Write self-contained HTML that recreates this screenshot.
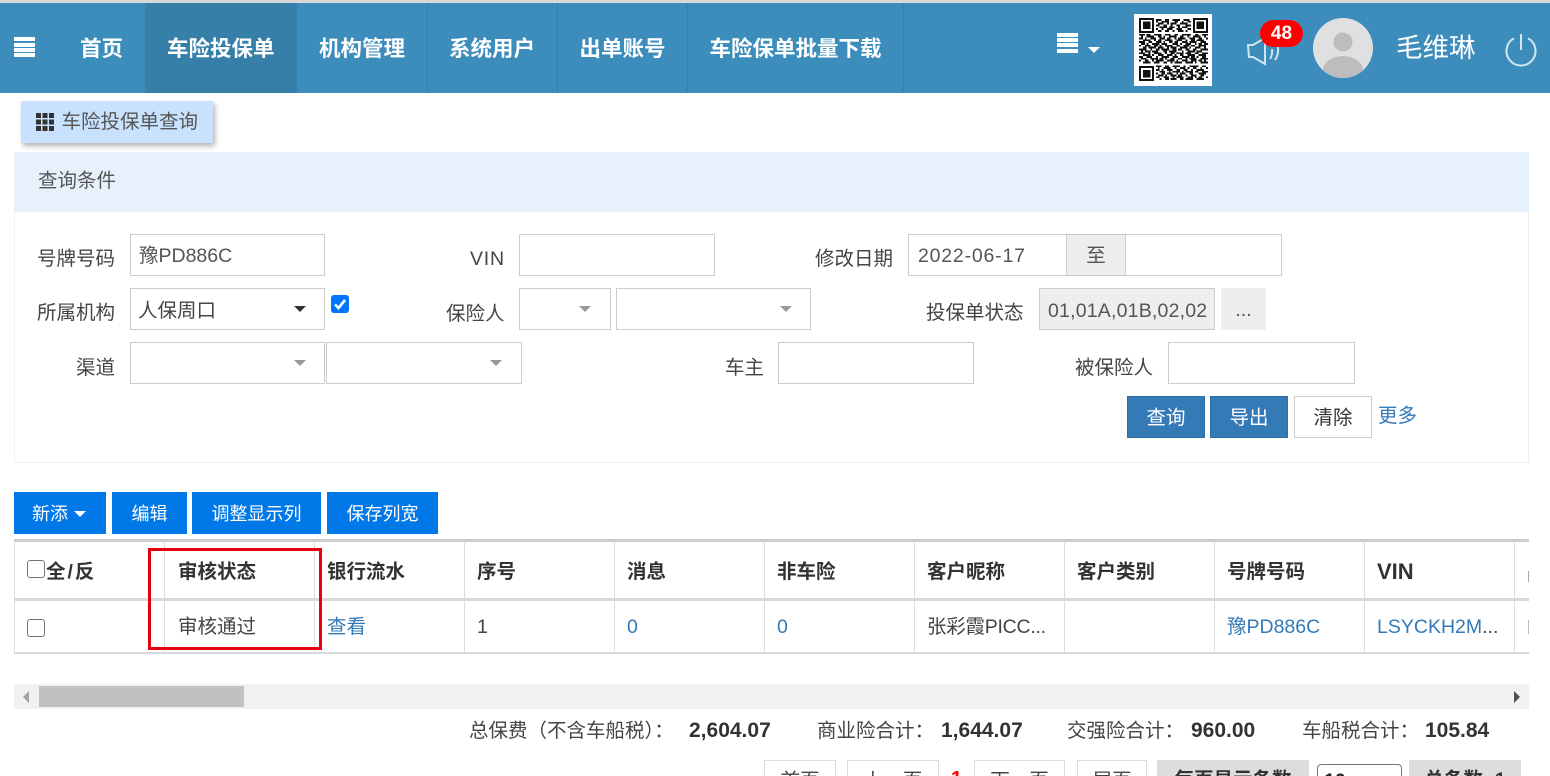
<!DOCTYPE html>
<html lang="zh">
<head>
<meta charset="utf-8">
<title>车险投保单查询</title>
<style>
html,body{margin:0;padding:0;background:#fff;width:1550px;height:776px;overflow:hidden;}
#p{position:relative;width:1550px;height:776px;overflow:hidden;font-family:"Liberation Sans","Noto Sans CJK SC",sans-serif;font-size:19.5px;color:#444;}
.a{position:absolute;box-sizing:border-box;}
.t{position:absolute;white-space:nowrap;line-height:28px;height:28px;}
.nav{position:absolute;top:35px;line-height:28px;font-size:21.5px;font-weight:bold;color:#fff;white-space:nowrap;}
.sep{position:absolute;top:3px;width:1px;height:90px;background:#367fa9;}
.in{position:absolute;box-sizing:border-box;border:1px solid #ccc;background:#fff;height:42px;line-height:42px;color:#555;white-space:nowrap;}
.car{position:absolute;width:0;height:0;border-left:6px solid transparent;border-right:6px solid transparent;border-top:6px solid #999;}
.btn{position:absolute;box-sizing:border-box;height:42px;line-height:42px;text-align:center;white-space:nowrap;}
.pb{position:absolute;top:492px;height:42px;line-height:44px;background:#0078e7;color:#fff;text-align:center;font-size:18px;white-space:nowrap;}
.hl{position:absolute;left:14px;width:1515px;background:#d9d9d9;}
.vl{position:absolute;top:541px;height:112px;width:1px;background:#ddd;}
.th{position:absolute;top:558px;line-height:28px;font-weight:bold;color:#333;white-space:nowrap;}
.td{position:absolute;top:613px;line-height:28px;color:#444;white-space:nowrap;}
.lk{color:#337ab7;}
.cb{position:absolute;box-sizing:border-box;width:18px;height:18px;border:1.5px solid #767676;border-radius:3px;background:#fff;}
.sm{position:absolute;top:717px;line-height:28px;white-space:nowrap;color:#444;}
.b{font-weight:bold;color:#333;font-size:21px;}
.pg{position:absolute;top:760px;height:30px;box-sizing:border-box;border:1px solid #ddd;background:#fff;text-align:center;line-height:40px;white-space:nowrap;color:#444;}
.pd{position:absolute;top:760px;height:30px;box-sizing:border-box;background:#ddd;text-align:center;line-height:40px;font-weight:bold;color:#333;white-space:nowrap;}
</style>
</head>
<body>
<div id="p">
<!-- top bar -->
<div class="a" style="left:0;top:0;width:1550px;height:3px;background:#d8d8d8"></div>
<div class="a" style="left:0;top:3px;width:1550px;height:90px;background:#3c8dbc"></div>
<div class="a" style="left:145px;top:3px;width:152px;height:90px;background:#367fa9"></div>
<div class="sep" style="left:427px"></div>
<div class="sep" style="left:557px"></div>
<div class="sep" style="left:687px"></div>
<div class="sep" style="left:903px"></div>
<div class="a" style="left:14px;top:37px;width:21px;height:4px;background:#fff"></div>
<div class="a" style="left:14px;top:43px;width:21px;height:4px;background:#fff"></div>
<div class="a" style="left:14px;top:48px;width:21px;height:4px;background:#fff"></div>
<div class="a" style="left:14px;top:53px;width:21px;height:4px;background:#fff"></div>
<div class="nav" style="left:80px">首页</div>
<div class="nav" style="left:167px">车险投保单</div>
<div class="nav" style="left:319px">机构管理</div>
<div class="nav" style="left:449px">系统用户</div>
<div class="nav" style="left:579.500px">出单账号</div>
<div class="nav" style="left:709.500px">车险保单批量下载</div>
<!-- right hamburger -->
<div class="a" style="left:1057px;top:33px;width:21px;height:4px;background:#fff"></div>
<div class="a" style="left:1057px;top:38px;width:21px;height:4px;background:#fff"></div>
<div class="a" style="left:1057px;top:43px;width:21px;height:4px;background:#fff"></div>
<div class="a" style="left:1057px;top:49px;width:21px;height:4px;background:#fff"></div>
<div class="car" style="left:1088px;top:47px;border-top-color:#fff"></div>
<!-- QR -->
<div class="a" style="left:1134px;top:14px;width:78px;height:72px;background:#fff"></div>
<svg class="a" style="left:1139px;top:18px" width="69" height="63" viewBox="0 0 37 34" shape-rendering="crispEdges">
<g fill="none" stroke="#111" stroke-width="1">
<path d="M.5.5h7v7h-7zM29.500.5h7v7h-7zM.5 26.500h7v7h-7z"/>
<path d="M9 1h3M14 1h2M18 1h4M24 1h3M9 2h1M12 2h4M19 2h2M23 2h1M26 2h2M10 3h3M15 3h1M17 3h3M22 3h4M9 4h2M13 4h2M17 4h1M20 4h2M25 4h3M11 5h4M16 5h3M21 5h1M23 5h3M9 6h1M12 6h1M15 6h3M20 6h3M26 6h2M10 7h2M14 7h2M18 7h1M21 7h3M25 7h1"/>
<path d="M0 9h3M4 9h2M8 9h4M14 9h3M19 9h2M23 9h5M30 9h2M34 9h3M1 10h1M4 10h4M10 10h2M13 10h1M16 10h4M22 10h2M26 10h1M29 10h4M35 10h1M0 11h2M3 11h1M6 11h3M11 11h3M15 11h2M19 11h1M21 11h4M27 11h3M32 11h2M36 11h1M2 12h4M8 12h1M10 12h2M14 12h4M20 12h3M25 12h1M28 12h2M31 12h4M0 13h3M5 13h2M9 13h3M13 13h1M16 13h2M19 13h2M23 13h3M27 13h4M33 13h3M1 14h2M4 14h1M7 14h4M12 14h3M18 14h3M22 14h1M25 14h3M30 14h1M32 14h2M35 14h2M0 15h1M3 15h3M8 15h2M11 15h1M14 15h4M20 15h2M24 15h3M28 15h2M32 15h4M2 16h2M5 16h4M10 16h3M15 16h1M17 16h3M22 16h4M27 16h1M30 16h3M35 16h1M0 17h4M6 17h1M9 17h2M12 17h4M18 17h2M21 17h2M25 17h2M29 17h2M33 17h4M1 18h1M3 18h3M7 18h3M13 18h2M16 18h4M23 18h1M26 18h4M31 18h3M0 19h3M5 19h1M8 19h4M14 19h1M17 19h2M20 19h4M25 19h3M30 19h2M34 19h3M2 20h4M7 20h1M10 20h3M15 20h3M19 20h1M22 20h2M26 20h4M32 20h4M0 21h2M4 21h3M9 21h1M12 21h4M18 21h3M23 21h4M28 21h2M31 21h1M34 21h2M1 22h3M6 22h4M11 22h2M14 22h1M17 22h2M21 22h2M25 22h1M27 22h4M33 22h4M0 23h1M3 23h2M7 23h1M9 23h4M15 23h4M20 23h1M23 23h3M28 23h3M32 23h2M35 23h1M2 24h4M8 24h3M13 24h2M17 24h1M19 24h4M25 24h4M30 24h1M33 24h4"/>
<path d="M9 26h3M14 26h2M18 26h4M24 26h1M27 26h5M34 26h2M10 27h1M13 27h4M19 27h1M22 27h3M26 27h1M29 27h2M33 27h1M36 27h1M9 28h2M12 28h1M15 28h3M20 28h2M24 28h2M28 28h1M31 28h4M11 29h3M16 29h1M18 29h4M23 29h1M25 29h4M30 29h2M34 29h3M9 30h1M12 30h2M15 30h3M20 30h1M22 30h3M27 30h2M32 30h4M10 31h3M14 31h1M17 31h3M21 31h2M25 31h1M28 31h3M33 31h2M9 32h2M13 32h3M18 32h1M20 32h4M26 32h3M30 32h1M32 32h2M36 32h1M11 33h1M14 33h2M17 33h3M22 33h2M25 33h4M31 33h4"/>
</g>
<path fill="#111" d="M2 2h4v4H2zM31 2h4v4h-4zM2 28h4v4H2z"/>
</svg>
<!-- speaker -->
<svg class="a" style="left:1245px;top:34px" width="38" height="34" viewBox="0 0 38 34" fill="none" stroke="#cfe4f0" stroke-width="2">
<path d="M3 11h5L20 4v26L8 23H4z"/>
<path d="M25 25c2-3 2.500-6 2-10"/>
<path d="M30 26c3-4 3.500-8 3-13"/>
</svg>
<div class="a" style="left:1260px;top:20px;width:43px;height:27px;border-radius:14px;background:#f00;color:#fff;font-weight:bold;font-size:19px;line-height:27px;text-align:center">48</div>
<!-- avatar -->
<svg class="a" style="left:1313px;top:18px" width="60" height="60" viewBox="0 0 60 60">
<defs><clipPath id="c"><circle cx="30" cy="30" r="30"/></clipPath></defs>
<circle cx="30" cy="30" r="30" fill="#e0e0e0"/>
<circle cx="30" cy="24" r="9.500" fill="#bdbdbd"/>
<ellipse cx="30" cy="52" rx="20" ry="14" fill="#bdbdbd" clip-path="url(#c)"/>
</svg>
<div class="t" style="left:1396px;top:32px;font-size:26.500px;line-height:32px;height:32px;color:#fff">毛维琳</div>
<svg class="a" style="left:1504px;top:31px" width="34" height="38" viewBox="0 0 34 38" fill="none" stroke="#d3e6f1" stroke-width="2">
<path d="M10 7.300a14.500 14.500 0 1 0 14 0"/>
<path d="M17 3v16"/>
</svg>

<!-- tab -->
<div class="a" style="left:21px;top:101px;width:192px;height:42px;background:#c8e1fc;box-shadow:2px 3px 5px rgba(0,0,0,.3)"></div>
<svg class="a" style="left:36px;top:113px" width="18" height="18" viewBox="0 0 18 18" fill="#333">
<path d="M0 0h5v5H0zM6.500 0h5v5h-5zM13 0h5v5h-5zM0 6.500h5v5H0zM6.500 6.500h5v5h-5zM13 6.500h5v5h-5zM0 13h5v5H0zM6.500 13h5v5h-5zM13 13h5v5h-5z"/>
</svg>
<div class="t" style="left:61.500px;top:108px;color:#555">车险投保单查询</div>

<!-- panel -->
<div class="a" style="left:14px;top:152px;width:1515px;height:311px;border:1px solid #e6f1fc;background:#fff"></div>
<div class="a" style="left:14px;top:152px;width:1514px;height:60px;background:#e6f1fc"></div>
<div class="t" style="left:38px;top:167px;color:#555">查询条件</div>

<div class="t" style="left:37px;top:245px">号牌号码</div>
<div class="in" style="left:130px;top:234px;width:195px;padding-left:8px">豫PD886C</div>
<div class="t" style="left:470px;top:245px;letter-spacing:.8px">VIN</div>
<div class="in" style="left:519px;top:234px;width:196px"></div>
<div class="t" style="left:815px;top:245px">修改日期</div>
<div class="in" style="left:908px;top:234px;width:159px;padding-left:9px;letter-spacing:.8px">2022-06-17</div>
<div class="in" style="left:1066px;top:234px;width:60px;background:#eee;text-align:center">至</div>
<div class="in" style="left:1125px;top:234px;width:157px"></div>

<div class="t" style="left:37px;top:299px">所属机构</div>
<div class="in" style="left:130px;top:288px;width:195px;padding-left:7px;color:#444;line-height:44px">人保周口</div>
<div class="car" style="left:294px;top:306px;border-top-color:#333"></div>
<div class="a" style="left:331px;top:295px;width:18px;height:18px;border-radius:3px;background:#0075ff"></div>
<svg class="a" style="left:331px;top:295px" width="18" height="18" viewBox="0 0 18 18" fill="none" stroke="#fff" stroke-width="2.600"><path d="M4 9.500l3.500 3.500L14 5"/></svg>
<div class="t" style="left:446px;top:300px">保险人</div>
<div class="in" style="left:519px;top:288px;width:92px"></div>
<div class="car" style="left:579px;top:306px"></div>
<div class="in" style="left:616px;top:288px;width:195px"></div>
<div class="car" style="left:780px;top:306px"></div>
<div class="t" style="left:926px;top:299px">投保单状态</div>
<div class="in" style="left:1039px;top:288px;width:176px;background:#eee;padding-left:8px;overflow:hidden;letter-spacing:.2px;line-height:44px">01,01A,01B,02,02</div>
<div class="a" style="left:1221px;top:288px;width:45px;height:42px;background:#eee;line-height:44px;text-align:center;color:#555">...</div>

<div class="t" style="left:76px;top:354px">渠道</div>
<div class="in" style="left:130px;top:342px;width:195px"></div>
<div class="car" style="left:294px;top:360px"></div>
<div class="in" style="left:326px;top:342px;width:196px"></div>
<div class="car" style="left:490px;top:360px"></div>
<div class="t" style="left:725px;top:354px">车主</div>
<div class="in" style="left:778px;top:342px;width:196px"></div>
<div class="t" style="left:1075px;top:354px">被保险人</div>
<div class="in" style="left:1168px;top:342px;width:187px"></div>

<div class="btn" style="left:1127px;top:396px;width:78px;background:#337ab7;border:1px solid #2e6da4;color:#fff;line-height:43px">查询</div>
<div class="btn" style="left:1210px;top:396px;width:78px;background:#337ab7;border:1px solid #2e6da4;color:#fff;line-height:43px">导出</div>
<div class="btn" style="left:1294px;top:396px;width:78px;background:#fff;border:1px solid #ccc;color:#333;line-height:43px">清除</div>
<div class="t" style="left:1378px;top:402px;color:#337ab7">更多</div>

<!-- toolbar -->
<div class="pb" style="left:14px;width:92px;text-align:left;padding-left:18px;box-sizing:border-box">新添</div>
<div class="car" style="left:74px;top:511px;border-top-color:#fff"></div>
<div class="pb" style="left:112px;width:75px">编辑</div>
<div class="pb" style="left:192px;width:129px">调整显示列</div>
<div class="pb" style="left:327px;width:111px">保存列宽</div>

<!-- table -->
<div class="hl" style="top:539px;height:3px;background:#ccc"></div>
<div class="hl" style="top:598px;height:3px"></div>
<div class="hl" style="top:652px;height:2px"></div>
<div class="vl" style="left:14px"></div>
<div class="vl" style="left:164px"></div>
<div class="vl" style="left:314px"></div>
<div class="vl" style="left:464px"></div>
<div class="vl" style="left:614px"></div>
<div class="vl" style="left:764px"></div>
<div class="vl" style="left:914px"></div>
<div class="vl" style="left:1064px"></div>
<div class="vl" style="left:1214px"></div>
<div class="vl" style="left:1364px"></div>
<div class="vl" style="left:1514px"></div>

<div class="cb" style="left:27px;top:560px"></div>
<div class="th" style="left:46px;letter-spacing:2px">全/反</div>
<div class="th" style="left:178px">审核状态</div>
<div class="th" style="left:327px">银行流水</div>
<div class="th" style="left:477px">序号</div>
<div class="th" style="left:627px">消息</div>
<div class="th" style="left:777px">非车险</div>
<div class="th" style="left:927px">客户昵称</div>
<div class="th" style="left:1077px">客户类别</div>
<div class="th" style="left:1227px">号牌号码</div>
<div class="th" style="left:1377px;font-size:22px">VIN</div>

<div class="cb" style="left:27px;top:619px"></div>
<div class="td" style="left:178px">审核通过</div>
<div class="td lk" style="left:327px">查看</div>
<div class="td" style="left:477px">1</div>
<div class="td lk" style="left:627px">0</div>
<div class="td lk" style="left:777px">0</div>
<div class="td" style="left:927px;letter-spacing:-.25px">张彩霞PICC...</div>
<div class="td lk" style="left:1227px">豫PD886C</div>
<div class="td lk" style="left:1377px">LSYCKH2M<span style="color:#444">...</span></div>
<div class="a" style="left:1528px;top:571px;width:1px;height:11px;background:#aaa"></div>
<div class="a" style="left:1528px;top:620px;width:1px;height:14px;background:#bbb"></div>

<div class="a" style="left:148px;top:548px;width:174px;height:102px;border:3px solid #e60012"></div>

<!-- scrollbar -->
<div class="a" style="left:14px;top:684px;width:1515px;height:25px;background:#f1f1f1"></div>
<div class="a" style="left:39px;top:686px;width:205px;height:21px;background:#c1c1c1"></div>
<div class="a" style="left:23px;top:691px;width:0;height:0;border-top:6px solid transparent;border-bottom:6px solid transparent;border-right:6px solid #a3a3a3"></div>
<div class="a" style="left:1514px;top:691px;width:0;height:0;border-top:6px solid transparent;border-bottom:6px solid transparent;border-left:6px solid #505050"></div>

<!-- summary -->
<div class="sm" style="left:469px">总保费（不含车船税）：</div>
<div class="sm b" style="left:689px">2,604.07</div>
<div class="sm" style="left:817px">商业险合计：</div>
<div class="sm b" style="left:941px">1,644.07</div>
<div class="sm" style="left:1067px">交强险合计：</div>
<div class="sm b" style="left:1191px">960.00</div>
<div class="sm" style="left:1302px">车船税合计：</div>
<div class="sm b" style="left:1425px">105.84</div>

<!-- pagination -->
<div class="pg" style="left:764px;width:72px">首页</div>
<div class="pg" style="left:847px;width:92px">上一页</div>
<div class="t" style="left:951px;top:765px;color:#f00;font-weight:bold;font-size:20px">1</div>
<div class="pg" style="left:974px;width:91px">下一页</div>
<div class="pg" style="left:1077px;width:70px">尾页</div>
<div class="pd" style="left:1157px;width:152px">每页显示条数</div>
<div class="a" style="left:1317px;top:764px;width:85px;height:30px;border:1px solid #767676;border-radius:4px;background:#fff;padding-left:6px;line-height:32px;font-weight:bold;color:#222">10</div>
<div class="pd" style="left:1409px;width:112px">总条数: 1</div>
</div>
</body>
</html>
